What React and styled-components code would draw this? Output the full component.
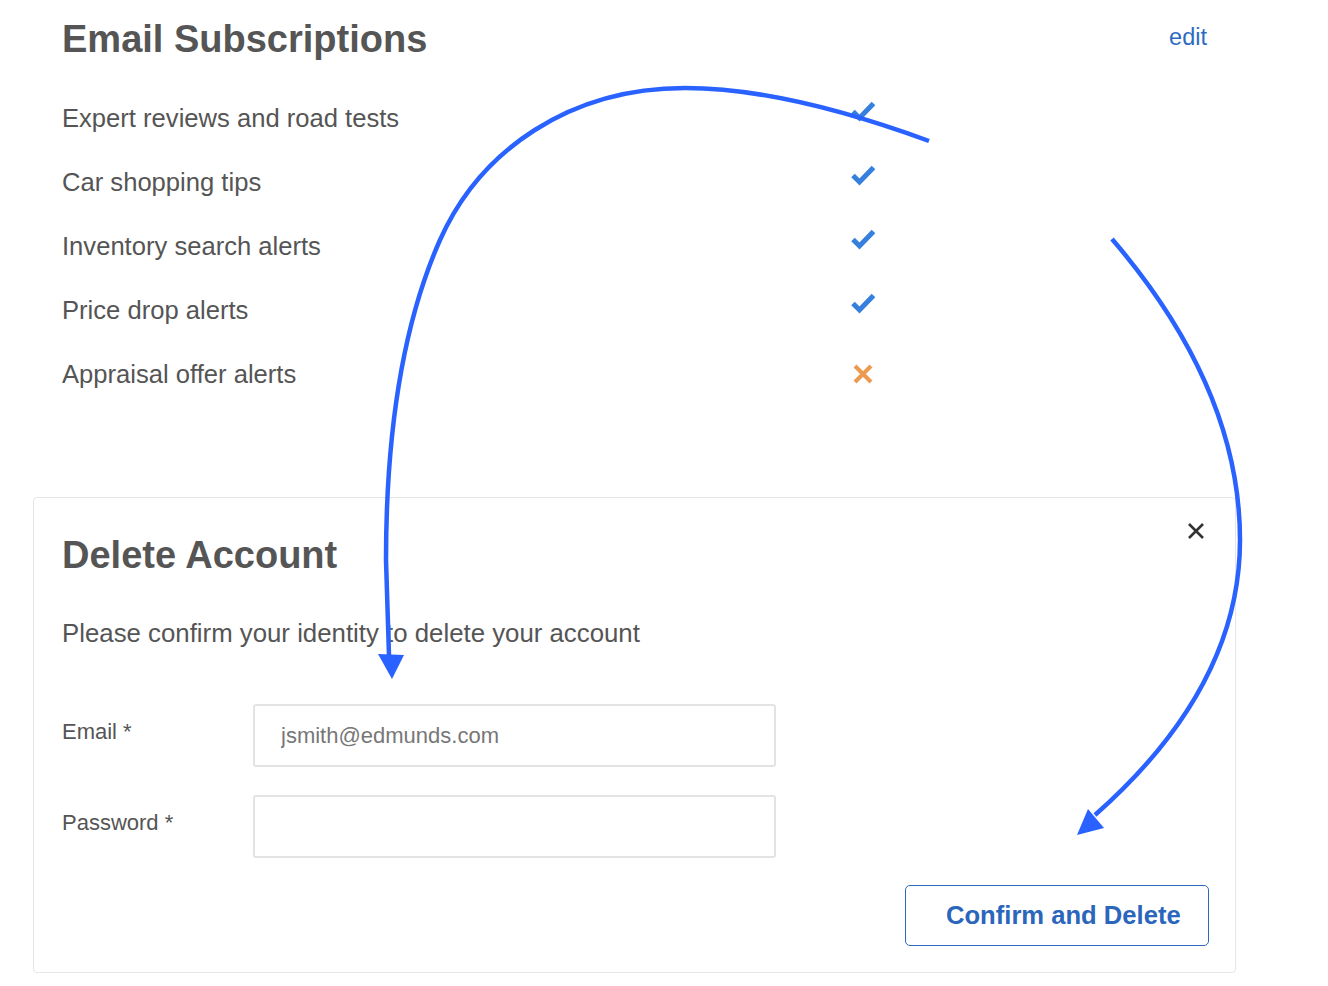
import React from "react";
import styled, { createGlobalStyle } from "styled-components";

const Global = createGlobalStyle`
  html, body { margin: 0; padding: 0; background: #fff; }
  body { font-family: "Liberation Sans", Arial, Helvetica, sans-serif; color: #555; }
  * { box-sizing: border-box; }
`;

const Page = styled.div`
  position: relative;
  width: 1328px;
  min-height: 986px;
  padding: 17px 92px 13px 33px;
`;

const Section = styled.section`
  padding: 0 29px;
`;

const HeaderRow = styled.div`
  display: flex;
  justify-content: space-between;
  align-items: center;
`;

const Title = styled.h2`
  margin: 0;
  font-size: 38px;
  line-height: 44px;
  font-weight: 700;
  color: #555;
`;

const EditLink = styled.a`
  font-size: 23.5px;
  color: #2d6bc2;
  text-decoration: none;
  margin-top: -4px;
`;

const List = styled.ul`
  list-style: none;
  margin: 25px 0 0;
  padding: 0;
`;

const Item = styled.li`
  display: grid;
  grid-template-columns: 788px 26px;
  align-items: center;
  height: 64px;
  font-size: 25.6px;
  color: #555;
`;

const IconCell = styled.span`
  display: flex;
  align-items: center;
  justify-content: center;
  width: 26px;
  transform: translateY(${(p) => (p.$on ? "-7px" : "0")});
`;

const Card = styled.div`
  position: relative;
  margin-top: 91px;
  border: 1px solid #e6e6e6;
  border-radius: 4px;
  padding: 35px 26px 26px 28px;
  display: flex;
  flex-direction: column;
`;

const CloseButton = styled.button`
  position: absolute;
  top: 24px;
  right: 30px;
  width: 18px;
  height: 18px;
  padding: 0;
  border: none;
  background: none;
  display: flex;
  align-items: center;
  justify-content: center;
  cursor: pointer;
`;

const Description = styled.p`
  margin: 41px 0 0;
  font-size: 25.8px;
  line-height: 30px;
  color: #555;
`;

const Form = styled.div`
  margin-top: 56px;
  display: flex;
  flex-direction: column;
  gap: 28px;
`;

const FieldRow = styled.div`
  display: flex;
  align-items: flex-start;
`;

const Label = styled.label`
  width: 191px;
  padding-top: 15px;
  font-size: 22px;
  line-height: 26px;
  color: #555;
`;

const Input = styled.input`
  width: 523px;
  height: 63px;
  border: 2px solid #e3e3e3;
  border-radius: 3px;
  padding: 0 26px;
  font-family: "Liberation Sans", Arial, sans-serif;
  font-size: 22px;
  color: #555;
  outline: none;
  &::placeholder { color: #777; }
`;

const Actions = styled.div`
  display: flex;
  justify-content: flex-end;
  margin-top: 27px;
`;

const PrimaryOutline = styled.button`
  width: 304px;
  height: 61px;
  border: 1.5px solid #2d68bd;
  border-radius: 5px;
  background: #fff;
  color: #2a66bb;
  font-family: "Liberation Sans", Arial, sans-serif;
  font-weight: 700;
  font-size: 25.6px;
  padding: 0 26px 0 40px;
  text-align: left;
  cursor: pointer;
`;

const Overlay = styled.svg`
  position: absolute;
  left: 0;
  top: 0;
  pointer-events: none;
`;

const Check = () => (
  <svg width="26" height="22" viewBox="0 0 26 22">
    <path d="M3 11.5 L9.5 18 L23.5 3.5" fill="none" stroke="#3580de" strokeWidth="5" />
  </svg>
);

const Cross = () => (
  <svg width="22" height="22" viewBox="0 0 22 22">
    <path d="M3 3 L19 19 M19 3 L3 19" fill="none" stroke="#eb9a50" strokeWidth="4" />
  </svg>
);

const CloseIcon = () => (
  <svg width="18" height="18" viewBox="0 0 18 18">
    <path d="M2 2 L16 16 M16 2 L2 16" fill="none" stroke="#333" strokeWidth="2.6" />
  </svg>
);

const subscriptions = [
  { label: "Expert reviews and road tests", on: true },
  { label: "Car shopping tips", on: true },
  { label: "Inventory search alerts", on: true },
  { label: "Price drop alerts", on: true },
  { label: "Appraisal offer alerts", on: false },
];

export default function App() {
  return (
    <>
      <Global />
      <Page>
        <Section>
          <HeaderRow>
            <Title>Email Subscriptions</Title>
            <EditLink href="#">edit</EditLink>
          </HeaderRow>
          <List>
            {subscriptions.map((s) => (
              <Item key={s.label}>
                <span>{s.label}</span>
                <IconCell $on={s.on}>{s.on ? <Check /> : <Cross />}</IconCell>
              </Item>
            ))}
          </List>
        </Section>

        <Card>
          <CloseButton aria-label="Close">
            <CloseIcon />
          </CloseButton>
          <Title>Delete Account</Title>
          <Description>Please confirm your identity to delete your account</Description>
          <Form>
            <FieldRow>
              <Label>Email *</Label>
              <Input placeholder="jsmith@edmunds.com" />
            </FieldRow>
            <FieldRow>
              <Label>Password *</Label>
              <Input type="password" />
            </FieldRow>
          </Form>
          <Actions>
            <PrimaryOutline>Confirm and Delete</PrimaryOutline>
          </Actions>
        </Card>

        <Overlay width="1328" height="986" viewBox="0 0 1328 986">
          <path
            d="M929 141 C 850 112, 760 88, 685 88 C 570 88, 480 150, 440 240 C 400 330, 386 440, 386 560 L 389 656"
            fill="none"
            stroke="#2962ff"
            strokeWidth="4.5"
          />
          <polygon points="378,654 404,655 392,679" fill="#2962ff" />
          <path
            d="M1112 239 C 1190 330, 1240 430, 1240 540 C 1240 650, 1180 740, 1095 815"
            fill="none"
            stroke="#2962ff"
            strokeWidth="4.5"
          />
          <polygon points="1088,809 1104,828 1077,835" fill="#2962ff" />
        </Overlay>
      </Page>
    </>
  );
}
